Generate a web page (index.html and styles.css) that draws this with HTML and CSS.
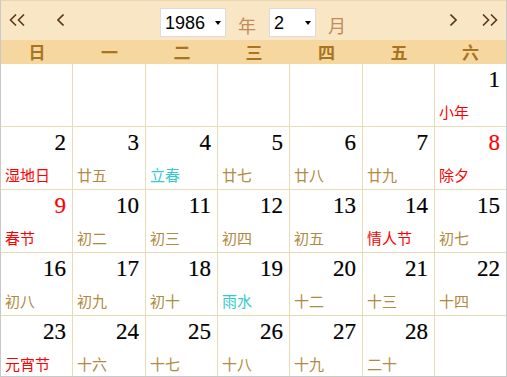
FILE: index.html
```html
<!DOCTYPE html>
<html lang="zh">
<head>
<meta charset="utf-8">
<title>日历</title>
<link rel="stylesheet" href="styles.css">
</head>
<body>
<div class="cal">
  <div class="head">
    <svg class="nav nav-dbl nav-first" viewBox="0 0 16 12" width="16" height="12"><polyline points="7,0.5 1.5,6 7,11.5"/><polyline points="15,0.5 9.5,6 15,11.5"/></svg>
    <svg class="nav nav-one nav-prev" viewBox="0 0 7 12" width="7" height="12"><polyline points="6.5,0.5 1,6 6.5,11.5"/></svg>
    <div class="sel sel-year"><span class="sel-val">1986</span><span class="tri"></span></div>
    <span class="unit unit-year">年</span>
    <div class="sel sel-month"><span class="sel-val">2</span><span class="tri"></span></div>
    <span class="unit unit-month">月</span>
    <svg class="nav nav-one nav-next" viewBox="0 0 7 12" width="7" height="12"><polyline points="0.5,0.5 6,6 0.5,11.5"/></svg>
    <svg class="nav nav-dbl nav-last" viewBox="0 0 16 12" width="16" height="12"><polyline points="1,0.5 6.5,6 1,11.5"/><polyline points="9,0.5 14.5,6 9,11.5"/></svg>
  </div>
  <div class="week">
    <span>日</span><span>一</span><span>二</span><span>三</span><span>四</span><span>五</span><span>六</span>
  </div>
  <div class="grid">
    <div class="cell"></div><div class="cell"></div><div class="cell"></div><div class="cell"></div><div class="cell"></div><div class="cell"></div>
    <div class="cell"><div class="num">1</div><div class="lun fest">小年</div></div>

    <div class="cell"><div class="num">2</div><div class="lun fest">湿地日</div></div>
    <div class="cell"><div class="num">3</div><div class="lun">廿五</div></div>
    <div class="cell"><div class="num">4</div><div class="lun term">立春</div></div>
    <div class="cell"><div class="num">5</div><div class="lun">廿七</div></div>
    <div class="cell"><div class="num">6</div><div class="lun">廿八</div></div>
    <div class="cell"><div class="num">7</div><div class="lun">廿九</div></div>
    <div class="cell"><div class="num red">8</div><div class="lun fest">除夕</div></div>

    <div class="cell"><div class="num red">9</div><div class="lun fest">春节</div></div>
    <div class="cell"><div class="num">10</div><div class="lun">初二</div></div>
    <div class="cell"><div class="num">11</div><div class="lun">初三</div></div>
    <div class="cell"><div class="num">12</div><div class="lun">初四</div></div>
    <div class="cell"><div class="num">13</div><div class="lun">初五</div></div>
    <div class="cell"><div class="num">14</div><div class="lun fest">情人节</div></div>
    <div class="cell"><div class="num">15</div><div class="lun">初七</div></div>

    <div class="cell"><div class="num">16</div><div class="lun">初八</div></div>
    <div class="cell"><div class="num">17</div><div class="lun">初九</div></div>
    <div class="cell"><div class="num">18</div><div class="lun">初十</div></div>
    <div class="cell"><div class="num">19</div><div class="lun term">雨水</div></div>
    <div class="cell"><div class="num">20</div><div class="lun">十二</div></div>
    <div class="cell"><div class="num">21</div><div class="lun">十三</div></div>
    <div class="cell"><div class="num">22</div><div class="lun">十四</div></div>

    <div class="cell last"><div class="num">23</div><div class="lun fest">元宵节</div></div>
    <div class="cell last"><div class="num">24</div><div class="lun">十六</div></div>
    <div class="cell last"><div class="num">25</div><div class="lun">十七</div></div>
    <div class="cell last"><div class="num">26</div><div class="lun">十八</div></div>
    <div class="cell last"><div class="num">27</div><div class="lun">十九</div></div>
    <div class="cell last"><div class="num">28</div><div class="lun">二十</div></div>
    <div class="cell last"></div>
  </div>
</div>
</body>
</html>
```
FILE: styles.css
```css
* { box-sizing: border-box; }
html, body { margin: 0; padding: 0; background: #fff; }

.cal {
  width: 507px;
  height: 377px;
  border: 1px solid #c9c9c9;
  border-top-color: #ecd6ad;
  background: #fff;
  font-family: "Noto Sans CJK SC", "Noto Sans", sans-serif;
  overflow: hidden;
}

.head {
  height: 39px;
  background: #f9e6c5;
  display: flex;
  align-items: flex-start;
}

.nav { display: block; margin-top: 13px; }
.nav polyline { fill: none; stroke: #5c3a1c; stroke-width: 1.6; }
.nav-first { margin-left: 8px; }
.nav-prev { margin-left: 32px; }
.nav-next { margin-left: 104px; }
.nav-last { margin-left: 25px; }

.sel {
  margin-top: 7px;
  height: 29px;
  background: #fff;
  border: 1px solid #d9dde2;
  display: flex;
  align-items: center;
  position: relative;
  font-family: "Liberation Sans", Arial, sans-serif;
  font-size: 18px;
  color: #000;
}
.sel-year { margin-left: 96px; width: 66px; }
.sel-month { margin-left: 13px; width: 47px; }
.sel-val { padding-left: 4px; line-height: 20px; }
.tri {
  position: absolute;
  right: 4px;
  top: 12px;
  width: 0;
  height: 0;
  border-left: 3.5px solid transparent;
  border-right: 3.5px solid transparent;
  border-top: 4px solid #000;
}

.unit {
  margin-top: 14px;
  margin-left: 12px;
  font-size: 18px;
  line-height: 20px;
  color: #c28a5c;
}

.week {
  display: grid;
  grid-template-columns: 72px 73px 72px 72px 73px 72px 71px;
  height: 24px;
  background: #f5d79f;
}
.week span {
  text-align: center;
  font-size: 17px;
  font-weight: 700;
  line-height: 24px;
  color: #a8741f;
}

.grid {
  display: grid;
  grid-template-columns: 72px 73px 72px 72px 73px 72px 71px;
  grid-template-rows: 63px 63px 63px 63px 60px;
}
.cell {
  border-right: 1px solid #e6dcb6;
  border-bottom: 1px solid #e6dcb6;
  padding: 5px 6px 0 4px;
}
.cell:nth-child(7n) { border-right: none; }
.cell.last { border-bottom: none; }

.num {
  text-align: right;
  font-family: "Liberation Serif", "Times New Roman", serif;
  font-size: 23px;
  line-height: 22px;
  color: #000;
  -webkit-text-stroke: 0.2px currentColor;
}
.num.red { color: #ff0000; }

.lun {
  margin-top: 13px;
  font-size: 15px;
  line-height: 15px;
  color: #b08a40;
  white-space: nowrap;
}
.lun.fest { color: #ff0000; }
.lun.term { color: #33cccc; }
```
